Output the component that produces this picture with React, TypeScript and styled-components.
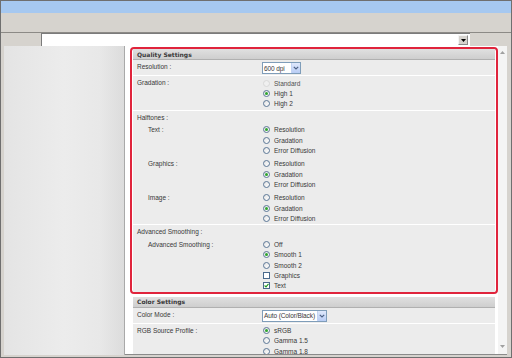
import { FC } from 'react';
import styled, { createGlobalStyle } from 'styled-components';

const GlobalStyle = createGlobalStyle`
    html, body {
        margin: 0;
        padding: 0;
        background: #ffffff;
    }
    body {
        font-family: "Liberation Sans", Arial, sans-serif;
        font-size: 6.5px;
        color: #383838;
    }
`;

type Option = { label: string; checked?: boolean; disabled?: boolean; check?: boolean };

const halftones: { label: string; options: Option[] }[] = [
    { label: 'Text :', options: [{ label: 'Resolution', checked: true }, { label: 'Gradation' }, { label: 'Error Diffusion' }] },
    { label: 'Graphics :', options: [{ label: 'Resolution' }, { label: 'Gradation', checked: true }, { label: 'Error Diffusion' }] },
    { label: 'Image :', options: [{ label: 'Resolution' }, { label: 'Gradation', checked: true }, { label: 'Error Diffusion' }] },
];

const OptionList: FC<{ options: Option[] }> = ({ options }) => (
    <Options>
        {options.map((o, i) => (
            <OptionLine key={i} disabled={o.disabled}>
                {o.check ? (
                    <CheckBox>{o.checked && <CheckMark viewBox="0 0 5 5"><path d="M0.6 2.5 L2 3.9 L4.5 0.9" /></CheckMark>}</CheckBox>
                ) : (
                    <Radio disabled={o.disabled}>{o.checked && <Dot />}</Radio>
                )}
                {o.label}
            </OptionLine>
        ))}
    </Options>
);

const Select: FC<{ value: string; width: number }> = ({ value, width }) => (
    <SelectBox style={{ width }}>
        <SelectText>{value}</SelectText>
        <SelectButton>
            <svg width="6" height="4" viewBox="0 0 6 4"><path d="M0.8 0.8 L3 3 L5.2 0.8" fill="none" stroke="#4d6185" strokeWidth="1.2" /></svg>
        </SelectButton>
    </SelectBox>
);

const App: FC = () => (
    <>
        <GlobalStyle />
        <Frame>
            <TitleBar />
            <Toolbar />
            <AddressRow>
                <AddressInput>
                    <DropButton>
                        <svg width="5" height="3" viewBox="0 0 5 3"><path d="M0 0 H5 L2.5 3 Z" fill="#000" /></svg>
                    </DropButton>
                </AddressInput>
            </AddressRow>
            <Body>
                <Sidebar />
                <Main>
                    <Content>
                        <Highlight>
                            <SectionHeader>Quality Settings</SectionHeader>
                            <Row>
                                <Label tall>Resolution :</Label>
                                <Select value="600 dpi" width={39} />
                            </Row>
                            <Row>
                                <Label>Gradation :</Label>
                                <OptionList options={[{ label: 'Standard', disabled: true }, { label: 'High 1', checked: true }, { label: 'High 2' }]} />
                            </Row>
                            <Row>
                                <Heading>Halftones :</Heading>
                                {halftones.map((g) => (
                                    <SubRow key={g.label}>
                                        <Label>{g.label}</Label>
                                        <OptionList options={g.options} />
                                    </SubRow>
                                ))}
                            </Row>
                            <Row>
                                <Heading>Advanced Smoothing :</Heading>
                                <SubRow>
                                    <Label>Advanced Smoothing :</Label>
                                    <OptionList
                                        options={[
                                            { label: 'Off' },
                                            { label: 'Smooth 1', checked: true },
                                            { label: 'Smooth 2' },
                                            { label: 'Graphics', check: true },
                                            { label: 'Text', check: true, checked: true },
                                        ]}
                                    />
                                </SubRow>
                            </Row>
                        </Highlight>
                        <Section>
                            <SectionHeader>Color Settings</SectionHeader>
                            <Row>
                                <Label tall>Color Mode :</Label>
                                <Select value="Auto (Color/Black)" width={65} />
                            </Row>
                            <Row>
                                <Label>RGB Source Profile :</Label>
                                <OptionList options={[{ label: 'sRGB', checked: true }, { label: 'Gamma 1.5' }, { label: 'Gamma 1.8' }]} />
                            </Row>
                        </Section>
                    </Content>
                    <Scrollbar>
                        <ScrollArrow>
                            <svg width="5" height="3" viewBox="0 0 5 3"><path d="M0 3 H5 L2.5 0 Z" fill="#a0a0a0" /></svg>
                        </ScrollArrow>
                        <ScrollArrow>
                            <svg width="5" height="3" viewBox="0 0 5 3"><path d="M0 0 H5 L2.5 3 Z" fill="#a0a0a0" /></svg>
                        </ScrollArrow>
                    </Scrollbar>
                </Main>
            </Body>
        </Frame>
    </>
);

const Frame = styled.div`
    width: 512px;
    height: 358px;
    box-sizing: border-box;
    border: 1px solid #6f6f6f;
    background: #d6d3ce;
    display: flex;
    flex-direction: column;
    overflow: hidden;
`;

const TitleBar = styled.div`
    height: 12px;
    background: #a6c8f0;
`;

const Toolbar = styled.div`
    height: 19px;
    background: #d6d3ce;
    border-bottom: 1px solid #8c8a86;
`;

const AddressRow = styled.div`
    height: 13px;
    display: flex;
    padding-left: 40px;
    padding-right: 41px;
`;

const AddressInput = styled.div`
    flex: 1;
    background: #ffffff;
    border-top: 1px solid #7b7b7b;
    border-left: 1px solid #7b7b7b;
    display: flex;
    justify-content: flex-end;
    align-items: center;
    padding-right: 2px;
`;

const DropButton = styled.div`
    width: 10px;
    height: 10px;
    box-sizing: border-box;
    background: #d6d3ce;
    border: 1px solid #8a8a8a;
    border-top-color: #f4f4f4;
    border-left-color: #f4f4f4;
    display: flex;
    align-items: center;
    justify-content: center;
`;

const Body = styled.div`
    flex: 1;
    min-height: 0;
    display: flex;
    padding: 0 4px 2px 3px;
`;

const Sidebar = styled.div`
    width: 120px;
    background: linear-gradient(to right, #e4e4e4, #ececec 50%, #e8e8e8 80%, #dcdcdc);
    border-right: 1px solid #a9a9a9;
`;

const Main = styled.div`
    flex: 1;
    display: flex;
    background: #ffffff;
    padding-left: 5px;
    border-bottom: 1px solid #8a8a8a;
    overflow: hidden;
`;

const Content = styled.div`
    flex: 1;
    padding-top: 1px;
    overflow: hidden;
`;

const Highlight = styled.div`
    border: 2px solid #e0243c;
    border-radius: 4px;
    padding: 0 1px;
    background: #ffffff;
`;

const Section = styled.div`
    margin: 3px 3px 0;
`;

const SectionHeader = styled.div`
    height: 11px;
    box-sizing: border-box;
    padding-left: 4px;
    display: flex;
    align-items: center;
    font-family: Tahoma, "DejaVu Sans", sans-serif;
    font-weight: bold;
    font-size: 6px;
    color: #3a3a3a;
    background: linear-gradient(to bottom, #e0e0e0, #cecece);
    border-bottom: 1px solid #b0b0b0;
`;

const Row = styled.div`
    display: grid;
    grid-template-columns: 125px 1fr;
    align-items: start;
    padding: 2px 0 1px 4px;
    background: #ececec;
    border-top: 1px solid #ffffff;
    &:nth-child(2) {
        border-top: none;
    }
`;

const Label = styled.div<{ tall?: boolean }>`
    line-height: ${({ tall }) => (tall ? '12px' : '10.2px')};
    margin-top: ${({ tall }) => (tall ? '-1px' : '0')};
    white-space: nowrap;
`;

const Heading = styled.div`
    grid-column: 1 / -1;
    line-height: 10.2px;
    margin-bottom: 2px;
`;

const SubRow = styled.div`
    grid-column: 1 / -1;
    display: grid;
    grid-template-columns: 114px 1fr;
    padding-left: 11px;
    & + & {
        margin-top: 3.5px;
    }
`;

const Options = styled.div`
    display: flex;
    flex-direction: column;
`;

const OptionLine = styled.div<{ disabled?: boolean }>`
    height: 10.2px;
    display: flex;
    align-items: center;
    gap: 4px;
    padding-left: 1px;
    white-space: nowrap;
    color: ${({ disabled }) => (disabled ? '#505050' : '#383838')};
`;

const Radio = styled.span<{ disabled?: boolean }>`
    width: 7px;
    height: 7px;
    box-sizing: border-box;
    border-radius: 50%;
    border: 1px solid ${({ disabled }) => (disabled ? '#d8d8d8' : '#5b7796')};
    background: ${({ disabled }) => (disabled ? '#f0f0f0' : 'linear-gradient(135deg, #e2e2e2, #ffffff)')};
    display: flex;
    align-items: center;
    justify-content: center;
`;

const Dot = styled.span`
    width: 3px;
    height: 3px;
    border-radius: 50%;
    background: #2fa52f;
`;

const CheckBox = styled.span`
    width: 7px;
    height: 7px;
    box-sizing: border-box;
    border: 1px solid #4a6a8c;
    background: #ffffff;
    display: flex;
`;

const CheckMark = styled.svg`
    width: 5px;
    height: 5px;
    path {
        fill: none;
        stroke: #1f9a1f;
        stroke-width: 1.1;
    }
`;

const SelectBox = styled.div`
    height: 12px;
    box-sizing: border-box;
    border: 1px solid #7f9db9;
    background: #ffffff;
    display: flex;
    align-items: stretch;
`;

const SelectText = styled.div`
    flex: 1;
    padding-left: 1px;
    display: flex;
    align-items: center;
    white-space: nowrap;
    letter-spacing: -0.1px;
`;

const SelectButton = styled.div`
    width: 8px;
    background: linear-gradient(to bottom, #dfe8fb, #b9cdf5);
    border-left: 1px solid #c3d3f3;
    display: flex;
    align-items: center;
    justify-content: center;
`;

const Scrollbar = styled.div`
    width: 9px;
    background: #f4f4f4;
    display: flex;
    flex-direction: column;
    justify-content: space-between;
    padding: 3px 0 4px;
`;

const ScrollArrow = styled.div`
    height: 7px;
    display: flex;
    align-items: center;
    justify-content: center;
`;

export default App;
